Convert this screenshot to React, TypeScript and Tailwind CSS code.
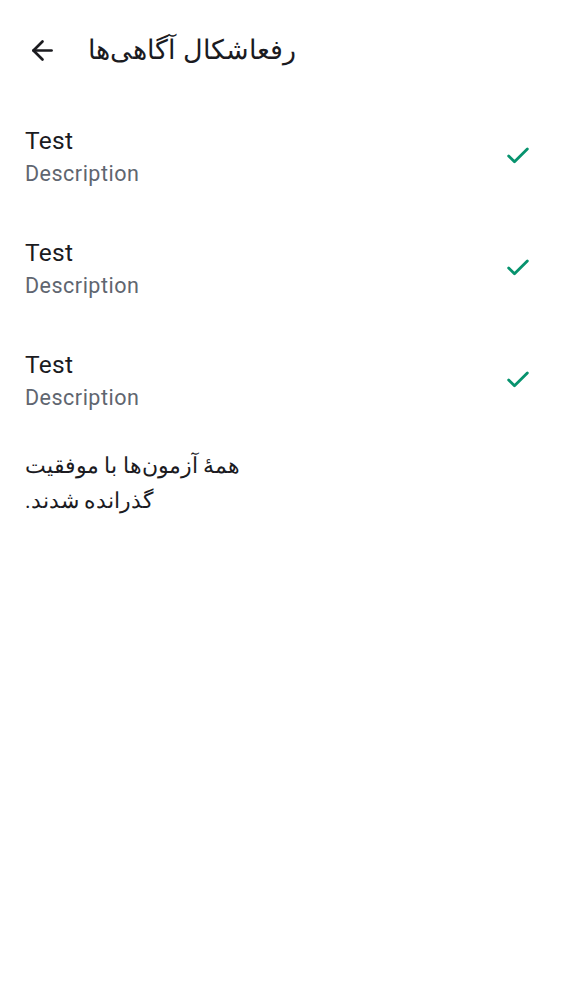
import { ArrowLeft, Check } from "lucide-react";

const items = [
  { title: "Test", description: "Description" },
  { title: "Test", description: "Description" },
  { title: "Test", description: "Description" },
];

export default function App() {
  return (
    <div className="min-h-screen bg-white font-['Roboto',sans-serif] text-[#1b1b1f]">
      {/* Top bar */}
      <div className="flex h-[100px] items-center pl-[27px]">
        <ArrowLeft className="h-[31px] w-[31px] text-[#1b1b1f]" strokeWidth={2.1} />
        <span className="ml-[30px] text-[26.5px] leading-none">رفعاشکال آگاهی‌ها</span>
      </div>

      {/* Tests */}
      <div className="flex flex-col">
        {items.map((item, i) => (
          <div key={i} className="flex h-[112px] items-center justify-between pl-[25px] pr-[30px]">
            <div className="flex flex-col gap-[3px]">
              <span className="text-[24.5px] leading-[32px] tracking-[0.3px]">{item.title}</span>
              <span className="text-[21.5px] leading-[28px] tracking-[0.5px] text-[#5f6670]">
                {item.description}
              </span>
            </div>
            <Check className="h-[28px] w-[28px] text-[#07936e]" strokeWidth={2.4} />
          </div>
        ))}
      </div>

      {/* Result */}
      <div className="mt-[12px] flex flex-col items-start pl-[25px] text-[21.5px] leading-[35px]">
        <span dir="rtl">همهٔ آزمون‌ها با موفقیت</span>
        <span dir="rtl">گذرانده شدند.</span>
      </div>
    </div>
  );
}
